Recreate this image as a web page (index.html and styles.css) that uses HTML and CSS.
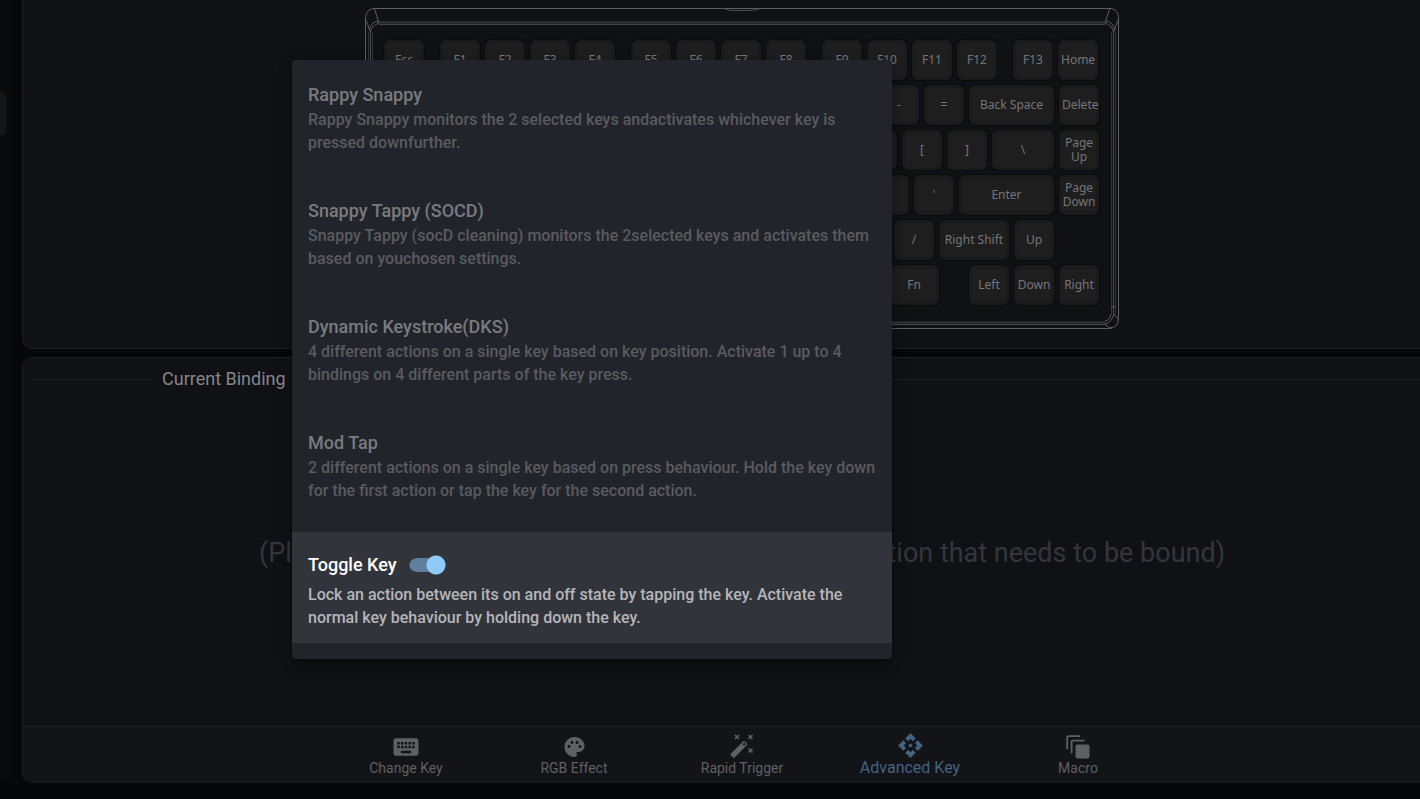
FILE: index.html
```html
<!DOCTYPE html>
<html lang="en">
<head>
  <meta charset="UTF-8">
  <meta name="viewport" content="width=device-width, initial-scale=1.0">
  <title>Advanced Key</title>
  <link rel="stylesheet" href="styles.css">
</head>
<body>

  <aside class="sidebar">
    <div class="sidebar-item"></div>
  </aside>

  <main class="content">
    <!-- Keyboard -->
    <section class="panel keyboard-panel">
      <div class="keyboard">
        <svg class="case" viewBox="0 0 754 321" preserveAspectRatio="none" fill="none">
          <path d="M8 .5H746Q753.500 2 753.500 10V311Q753 320 744 320.500H10Q1 320 .5 311V10Q1 2 8 .5Z" stroke="#5c5e61"/>
          <path d="M14 14.500H740" stroke="#35363a" stroke-width="2"/>
          <path d="M14 16.500H740" stroke="#47484b"/>
          <path d="M14 314.500H740" stroke="#35363a" stroke-width="2"/>
          <path d="M14 316.500H740" stroke="#47484b"/>
          <path d="M3.500 24V306M7.500 24V306M746.500 24V306M750.500 24V306" stroke="#323336"/>
          <path d="M5.500 24V306M748.500 24V306" stroke="#4a4b4e"/>
          <path d="M9.500 1 14 15Q6 18 5.500 24L1 12M4 22Q6 14 13 13M744.500 1 740 15Q748 18 748.500 24L753 12M750 22Q748 14 741 13" stroke="#5c5e61"/>
          <path d="M746 299H750M749 306Q747 314 740 316M746 306Q745 312 740 313M740 316Q743 320 747 320M749 306 753 311M8 299H4M5 306Q7 314 14 316M14 316Q11 320 7 320" stroke="#5c5e61"/>
          <path d="M360 1Q363 2.500 370 2.500H384Q391 2.500 394 1" stroke="#4a4b4e"/>
        </svg>
        <div class="keys">
          <div class="key-row">
            <button class="key">Esc</button>
            <button class="key group">F1</button>
            <button class="key">F2</button>
            <button class="key">F3</button>
            <button class="key">F4</button>
            <button class="key group">F5</button>
            <button class="key">F6</button>
            <button class="key">F7</button>
            <button class="key">F8</button>
            <button class="key group">F9</button>
            <button class="key">F10</button>
            <button class="key">F11</button>
            <button class="key">F12</button>
            <button class="key group">F13</button>
            <button class="key">Home</button>
          </div>
          <div class="key-row">
            <button class="key">`</button>
            <button class="key">1</button>
            <button class="key">2</button>
            <button class="key">3</button>
            <button class="key">4</button>
            <button class="key">5</button>
            <button class="key">6</button>
            <button class="key">7</button>
            <button class="key">8</button>
            <button class="key">9</button>
            <button class="key">0</button>
            <button class="key">-</button>
            <button class="key">=</button>
            <button class="key fill">Back Space</button>
            <button class="key">Delete</button>
          </div>
          <div class="key-row">
            <button class="key tab">Tab</button>
            <button class="key">Q</button>
            <button class="key">W</button>
            <button class="key">E</button>
            <button class="key">R</button>
            <button class="key">T</button>
            <button class="key">Y</button>
            <button class="key">U</button>
            <button class="key">I</button>
            <button class="key">O</button>
            <button class="key">P</button>
            <button class="key">[</button>
            <button class="key">]</button>
            <button class="key fill">\</button>
            <button class="key">Page Up</button>
          </div>
          <div class="key-row">
            <button class="key caps">Caps Lock</button>
            <button class="key">A</button>
            <button class="key">S</button>
            <button class="key">D</button>
            <button class="key">F</button>
            <button class="key">G</button>
            <button class="key">H</button>
            <button class="key">J</button>
            <button class="key">K</button>
            <button class="key">L</button>
            <button class="key">;</button>
            <button class="key">'</button>
            <button class="key fill">Enter</button>
            <button class="key">Page Down</button>
          </div>
          <div class="key-row">
            <button class="key shift">Left Shift</button>
            <button class="key">Z</button>
            <button class="key">X</button>
            <button class="key">C</button>
            <button class="key">V</button>
            <button class="key">B</button>
            <button class="key">N</button>
            <button class="key">M</button>
            <button class="key">,</button>
            <button class="key">.</button>
            <button class="key">/</button>
            <button class="key fill">Right Shift</button>
            <button class="key">Up</button>
            <span class="blank"></span>
          </div>
          <div class="key-row">
            <button class="key mod">Ctrl</button>
            <button class="key mod">Win</button>
            <button class="key mod">Alt</button>
            <button class="key fill">Space</button>
            <button class="key mod">Alt</button>
            <button class="key mod">Fn</button>
            <button class="key arrows">Left</button>
            <button class="key">Down</button>
            <button class="key">Right</button>
          </div>
        </div>
      </div>
    </section>

    <!-- Bindings -->
    <section class="panel binding-panel">
      <h2 class="divider">Current Binding</h2>
      <p class="hint">(Please select the key position, then choose the function that needs to be bound)</p>
      <nav class="tabs">
        <a class="tab-link" href="#change-key">
          <svg viewBox="0 0 24 24" width="30" height="24" preserveAspectRatio="xMidYMid slice"><path d="M20 5H4c-1.100 0-1.990.9-1.990 2L2 17c0 1.100.9 2 2 2h16c1.100 0 2-.9 2-2V7c0-1.100-.9-2-2-2zm-9 3h2v2h-2V8zm0 3h2v2h-2v-2zM8 8h2v2H8V8zm0 3h2v2H8v-2zm-1 2H5v-2h2v2zm0-3H5V8h2v2zm9 7H8v-2h8v2zm0-4h-2v-2h2v2zm0-3h-2V8h2v2zm3 3h-2v-2h2v2zm0-3h-2V8h2v2z"/></svg>
          Change Key
        </a>
        <a class="tab-link" href="#rgb-effect">
          <svg viewBox="0 0 24 24" width="25" height="24"><path d="M12 2C6.490 2 2 6.490 2 12s4.490 10 10 10c1.380 0 2.500-1.120 2.500-2.500 0-.61-.23-1.200-.64-1.670-.08-.1-.13-.21-.13-.33 0-.28.22-.5.5-.5H16c3.310 0 6-2.690 6-6 0-4.960-4.490-9-10-9zm5.500 11c-.83 0-1.500-.67-1.500-1.500s.67-1.500 1.500-1.500 1.500.67 1.500 1.500-.67 1.500-1.500 1.500zm-3-4c-.83 0-1.500-.67-1.500-1.500S13.670 6 14.500 6s1.500.67 1.500 1.500S15.330 9 14.500 9zM5 11.500c0-.83.67-1.500 1.500-1.500s1.500.67 1.500 1.500S7.330 13 6.500 13 5 12.330 5 11.500zm6-4c0 .83-.67 1.500-1.500 1.500S8 8.330 8 7.500 8.670 6 9.500 6s1.500.67 1.500 1.500z"/></svg>
          RGB Effect
        </a>
        <a class="tab-link" href="#rapid-trigger">
          <svg viewBox="0 0 26 26" width="26" height="26"><path d="M2 20.500 14 8.500q1-1 2 0l1.800 1.800q1 1 0 2L5.800 24.300q-1 1-2 0L2 22.500q-1-1 0-2zM13.500 11.200l1.600 1.600 1.700-1.600-1.600-1.700z" fill-rule="evenodd"/><path d="M6 2l4 4M10 2 6 6M19.500 2l4 4M23.500 2l-4 4M19.500 15.500l4 4M23.500 15.500l-4 4" stroke="currentColor" stroke-width="1.600"/></svg>
          Rapid Trigger
        </a>
        <a class="tab-link active" href="#advanced-key">
          <svg viewBox="0 0 24 24" width="27" height="27"><path d="m14 12-2 2-2-2 2-2 2 2zm-2-6 2.120 2.120 2.500-2.500L12 1 7.380 5.620l2.500 2.500L12 6zm-6 6 2.120-2.120-2.500-2.500L1 12l4.620 4.620 2.500-2.500L6 12zm12 0-2.120 2.120 2.500 2.500L23 12l-4.620-4.620-2.500 2.500L18 12zm-6 6-2.120-2.120-2.500 2.500L12 23l4.620-4.620-2.500-2.500L12 18z"/></svg>
          Advanced Key
        </a>
        <a class="tab-link" href="#macro">
          <svg viewBox="0 0 24 24" width="24" height="24"><path d="M1.200 14V2.200Q1.200 1.200 2.200 1.200H14M5.600 18.500V6.600Q5.600 5.600 6.600 5.600H18.500" fill="none" stroke="currentColor" stroke-width="1.800"/><rect x="9.500" y="9.500" width="14" height="14" rx="2"/></svg>
          Macro
        </a>
      </nav>
    </section>
  </main>

  <!-- Advanced key menu -->
  <ul class="menu">
    <li class="menu-item">
      <h3>Rappy Snappy</h3>
      <p>Rappy Snappy monitors the 2 selected keys andactivates whichever key is pressed downfurther.</p>
    </li>
    <li class="menu-item">
      <h3>Snappy Tappy (SOCD)</h3>
      <p>Snappy Tappy (socD cleaning) monitors the 2selected keys and activates them based on youchosen settings.</p>
    </li>
    <li class="menu-item">
      <h3>Dynamic Keystroke(DKS)</h3>
      <p>4 different actions on a single key based on key position. Activate 1 up to 4 bindings on 4 different parts of the key press.</p>
    </li>
    <li class="menu-item">
      <h3>Mod Tap</h3>
      <p>2 different actions on a single key based on press behaviour. Hold the key down for the first action or tap the key for the second action.</p>
    </li>
    <li class="menu-item selected">
      <h3>
        <label for="toggleKey">Toggle Key</label>
        <input class="switch" type="checkbox" id="toggleKey" checked>
      </h3>
      <p>Lock an action between its on and off state by tapping the key. Activate the normal key behaviour by holding down the key.</p>
    </li>
  </ul>

</body>
</html>
```
FILE: styles.css
```css
* {
  box-sizing: border-box;
}
body {
  display: flex;
  gap: 10px;
  height: 100vh;
  margin: 0;
  overflow: hidden;
  background-color: #060709;
  color: #85868a;
  font-family: Roboto, sans-serif;
}
h2, h3, p, ul {
  margin: 0;
  padding: 0;
}

/* Sidebar */
.sidebar {
  flex: none;
  width: 12px;
  margin-bottom: 16px;
  padding-top: 92px;
  background-color: #090a0c;
  border-radius: 0 0 12px 0;
}
.sidebar-item {
  width: 7px;
  height: 44px;
  background-color: #10161c;
  border-radius: 0 8px 8px 0;
}

/* The panels run on past the right edge of the window */
.content {
  display: flex;
  flex: none;
  flex-direction: column;
  gap: 8px;
  width: calc(100% + 20px);
  padding-bottom: 16px;
}
.panel {
  background-color: #101114;
  border: 1px solid #1d1e21;
  border-radius: 10px;
}
.keyboard-panel {
  display: flex;
  justify-content: center;
  padding: 8px 0 19px;
  border-top: none;
  border-radius: 0 0 10px 10px;
}

/* Keyboard */
.keyboard {
  display: grid;
}
.case {
  grid-area: 1 / 1;
  width: 100%;
  height: 100%;
}
.keys {
  display: flex;
  flex-direction: column;
  grid-area: 1 / 1;
  gap: 5px;
  width: 754px;
  padding: 32px 20px 24px 19px;
}
.key-row {
  display: flex;
  gap: 5px;
}
.key {
  flex: none;
  width: 40px;
  height: 40px;
  padding: 0;
  background-color: #1e1e1e;
  border: 3px solid #1b1b1b;
  border-radius: 6px;
  box-shadow: 0 0 0 1px #0b0b0c;
  color: #75767a;
  font-family: "Noto Sans", sans-serif;
  font-size: 12px;
  line-height: 14px;
}
.key.group {
  margin-left: 11px;
}
.key.fill {
  flex: 1;
}
.key.tab {
  width: 63px;
}
.key.caps {
  width: 75px;
}
.key.shift {
  width: 100px;
}
.key.mod {
  width: 50px;
}
.key.arrows {
  margin-left: 25px;
}
.blank {
  width: 40px;
}

/* Bindings */
.binding-panel {
  display: flex;
  flex: 1;
  flex-direction: column;
  overflow: hidden;
  border-bottom: none;
}
.divider {
  display: flex;
  align-items: center;
  gap: 10px;
  padding: 8px 9px;
  font-size: 18px;
  font-weight: 400;
  line-height: 26px;
}
.divider::before, .divider::after {
  content: "";
  width: 120px;
  border-top: 1px solid #1d1e21;
}
.divider::after {
  flex: 1;
}
.hint {
  display: flex;
  flex: 1;
  align-items: center;
  justify-content: center;
  padding-bottom: 20px;
  color: #33363c;
  font-size: 27px;
  white-space: nowrap;
}
.tabs {
  display: flex;
  justify-content: center;
  height: 57px;
  background-color: #131418;
  border-top: 1px solid #1d1e21;
}
.tab-link {
  display: flex;
  flex-direction: column;
  align-items: center;
  justify-content: flex-end;
  width: 168px;
  padding-bottom: 5px;
  color: #5f6063;
  font-size: 14px;
  line-height: 20px;
  text-decoration: none;
}
.tab-link svg {
  margin-bottom: -1px;
  fill: currentColor;
}
.tab-link.active {
  color: #436381;
  font-size: 16px;
}

/* Menu */
.menu {
  position: absolute;
  top: 60px;
  left: 292px;
  width: 600px;
  padding: 8px 0 16px;
  background-color: #21242b;
  border-radius: 4px;
  box-shadow: 0 5px 5px -3px rgba(0, 0, 0, 0.2), 0 8px 10px 1px rgba(0, 0, 0, 0.14), 0 3px 14px 2px rgba(0, 0, 0, 0.12);
  list-style: none;
}
.menu-item {
  height: 116px;
  padding: 13px 16px;
  color: #5a5b5f;
}
.menu-item h3 {
  display: flex;
  align-items: center;
  color: #7a7b7f;
  font-size: 18px;
  font-weight: 500;
  line-height: 27px;
}
.menu-item p {
  font-size: 16px;
  font-weight: 500;
  line-height: 23px;
}
.menu-item.selected {
  height: 111px;
  padding-top: 14px;
  background-color: #32343c;
  color: #b5b6b9;
}
.menu-item.selected h3 {
  gap: 12px;
  height: 37px;
  color: #fff;
}
.switch {
  width: 37px;
  height: 20px;
  margin: 0;
  appearance: none;
  background:
    radial-gradient(circle at 27px 10px, #90caf9 9px, transparent 10px),
    linear-gradient(#607f9c, #607f9c) 7px 3px / 20px 14px no-repeat,
    radial-gradient(circle at 7px 10px, #607f9c 6px, transparent 7px);
}
```
